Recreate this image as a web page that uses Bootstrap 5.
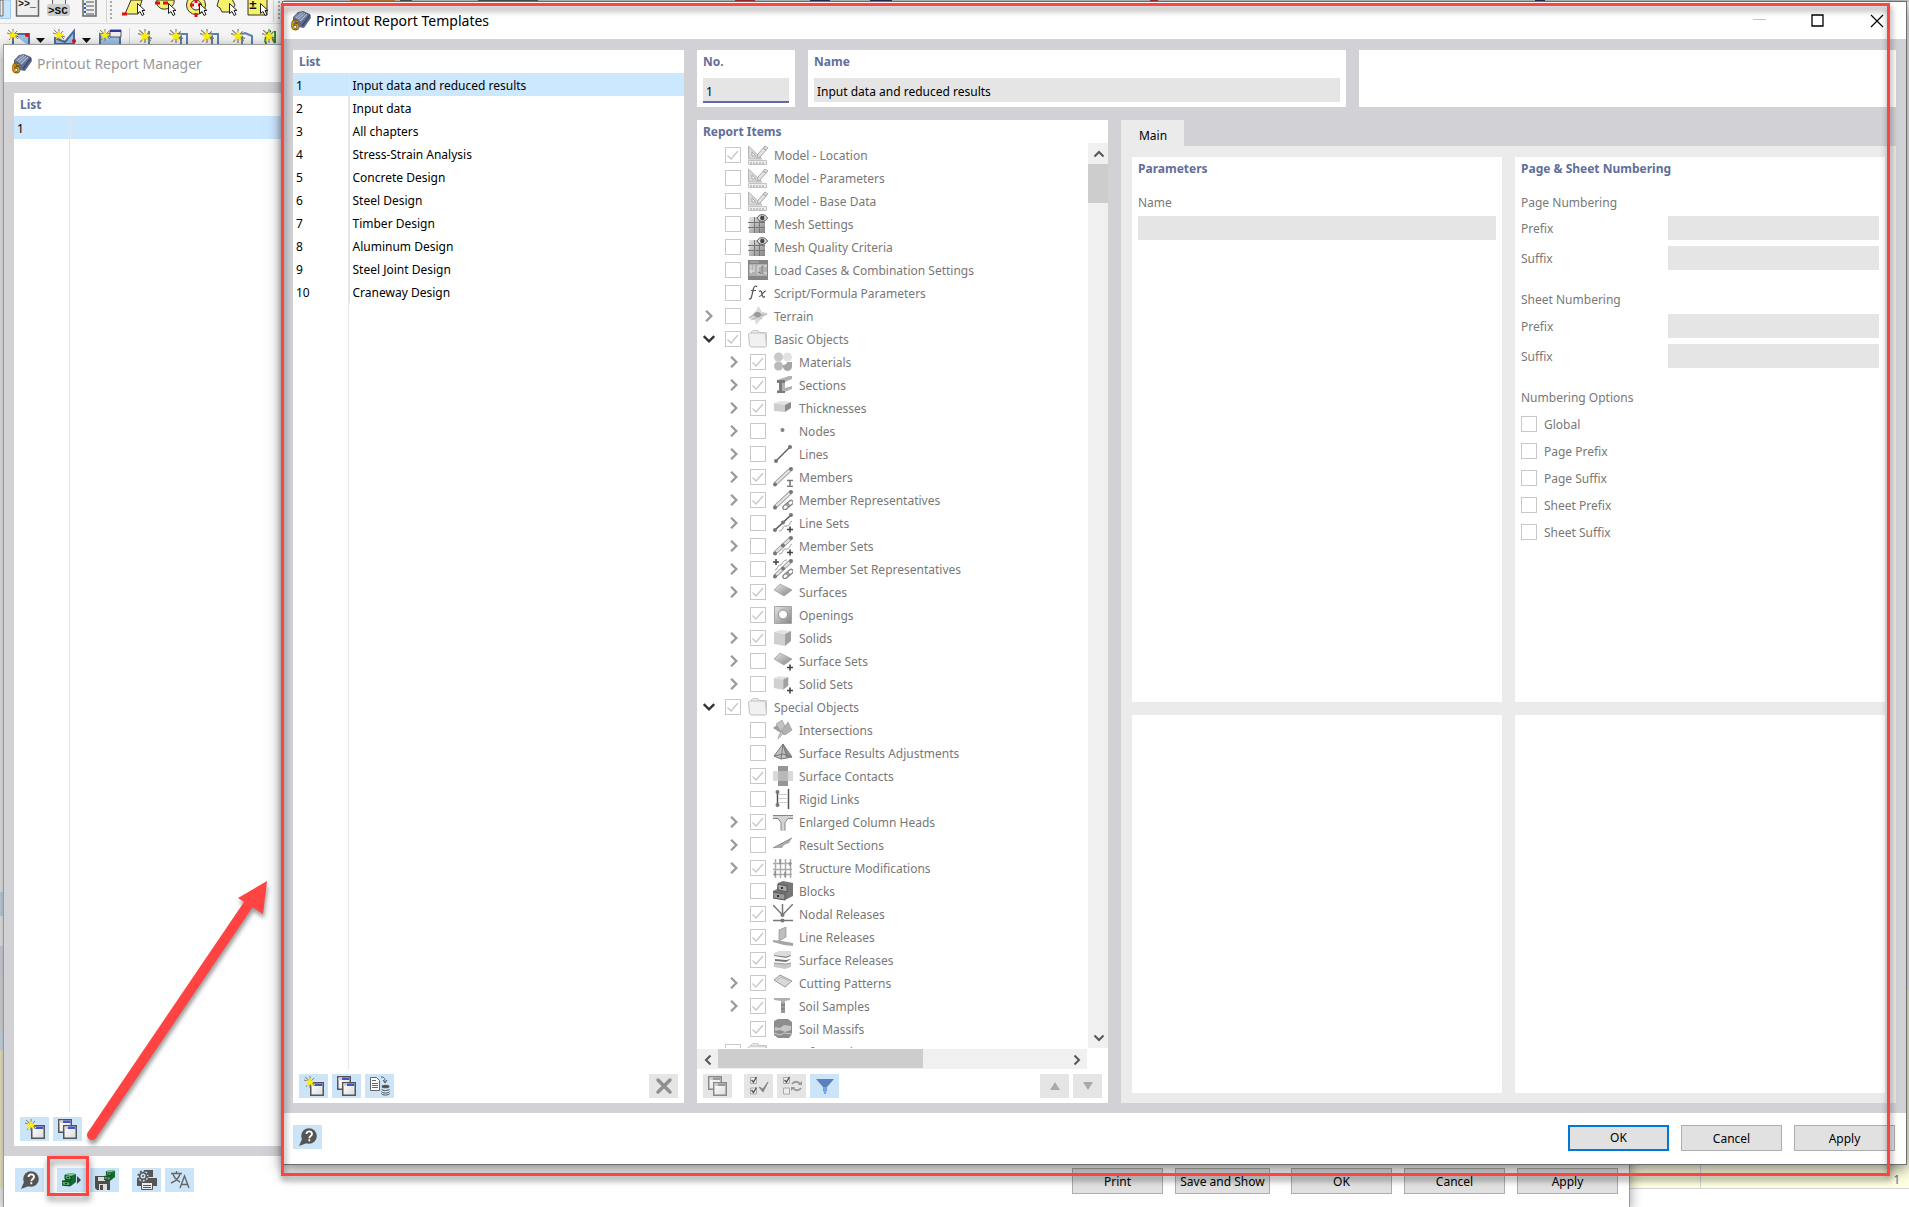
<!DOCTYPE html>
<html lang="en">
<head>
<meta charset="utf-8">
<meta name="viewport" content="width=device-width, initial-scale=1">
<title>Printout Report Templates</title>
<link href="https://cdn.jsdelivr.net/npm/bootstrap@5.3.0/dist/css/bootstrap.min.css" rel="stylesheet">
<style>
  :root { --frame:#d2d1d6; --soft:#ebebeb; --field:#e5e5e5; --tool:#cce4f7; --pick:#cce8ff; --head:#5f6e9b; --dim:#787878; --red:#ff4343; }
  html, body { height:100%; }
  body { font-family:"Noto Sans","Open Sans",sans-serif; font-size:12px; line-height:16px; color:#000; background:#f4f4f4; }
  svg { display:block; flex:none; }
  .desktop { height:100vh; min-height:900px; }
  .win { position:absolute; background:#fff; }
  .win-manager { left:3px; top:44px; right:279px; bottom:0; border:1px solid #9a9a9a; border-bottom:0; box-shadow:0 3px 12px rgba(0,0,0,.4); }
  .win-templates { left:282px; top:1px; right:2px; bottom:42px; border:1px solid #6e6e6e; box-shadow:0 4px 14px rgba(0,0,0,.5); }
  .win-title { height:37px; padding-left:8px; gap:5px; font-size:14px; color:#000; }
  .win-manager .win-title { color:#999; }
  .frame { background:var(--frame); min-height:0; padding:11px 10px 10px; }
  .pane { background:#fff; }
  .pane-head { height:23px; padding:3px 6px; font-weight:700; font-size:12px; line-height:17px; color:var(--head); margin:0; }
  .list-body { background:linear-gradient(#e6e6e6,#e6e6e6) 55px 0/1px 100% no-repeat; }
  .list-grid { width:100%; }
  .list-grid td { height:23px; padding:3px 3px 0; line-height:16px; white-space:nowrap; }
  .list-grid td:first-child { width:56px; border-right:1px solid #e6e6e6; }
  .list-grid .picked td { background:var(--pick); }
  .tool { width:29px; height:24px; padding:0; border:0; background:var(--tool); display:flex; align-items:center; justify-content:center; }
  .tool:disabled { background:var(--field); }
  .apart { margin-left:13px; }
  .toolrow { padding:5px 6px; height:34px; gap:4px; }
  .field { border:0; background:var(--field); height:24px; padding:3px 3px 0; width:100%; min-width:0; color:#000; border-radius:0; font-size:12px; }
  .field-no { border-bottom:2px solid #6566b0; height:25px; }
  .push { width:101px; height:26px; border:1px solid #adadad; background:#e1e1e1; font-size:12px; padding:1px 0 0; line-height:16px; color:#000; white-space:nowrap; }
  .push-main { border:2px solid #0078d7; padding:0; }
  .push-row { gap:12px; }
  .push-print { width:91px; }
  .push-save { width:95px; margin-right:9px; }
  .col-list { flex:391 1 0; min-width:0; }
  .col-right { flex:1199 1 0; min-width:0; }
  .col-items { flex:411 1 0; min-width:0; }
  .col-detail { flex:775 1 0; min-width:0; }
  .gap-frame { gap:13px; }
  .top-pane { height:57px; }
  .top-field { padding:5px 6px 0; }
  .box-no { width:98px; flex:none; }
  .box-even { flex:1 1 0; min-width:0; }
  .tree { min-height:0; overflow:hidden; padding-left:4px; }
  .tree-row { height:23px; color:var(--dim); white-space:nowrap; }
  .tree-row label { margin-left:6px; padding-top:3px; }
  .tree-row .icon { margin-left:7px; }
  .kids { padding-left:25px; }
  .twist { width:21px; height:23px; border:0; background:none; padding:0 0 0 1px; flex:none; margin-right:3px; }
  .tick { appearance:none; width:16px; height:16px; border:1px solid #c8c8c8; background:#fff; margin:0; border-radius:0; flex:none; }
  .tick:checked { background:#fff url("data:image/svg+xml,%3Csvg xmlns='http://www.w3.org/2000/svg' viewBox='0 0 14 14'%3E%3Cpath d='M1.5 7.5l3.5 3.5 7-8' fill='none' stroke='%23c6c6c6' stroke-width='1.3'/%3E%3C/svg%3E") center/14px no-repeat; }
  .bar { background:#f0f0f0; }
  .bar-v { width:20px; } .bar-h { height:20px; margin:1px 21px 0 0; }
  .bar button { width:21px; height:21px; border:0; padding:0; background:none; display:flex; align-items:center; justify-content:center; flex:none; }
  .bar-v .thumb { background:#cdcdcd; height:39px; } .bar-h .thumb { background:#cdcdcd; width:205px; height:19px; }
  .tab-main { width:63px; height:26px; border:0; background:var(--soft); padding:5px 0 0 1px; font-size:12px; }
  .tab-body { background:var(--soft); padding:11px 11px 10px; display:grid; grid-template:545fr 378fr / 1fr 1fr; gap:13px; }
  .dim { color:var(--dim); }
  .form-part { padding:15px 6px 0; }
  .num-row { height:24px; margin-bottom:6px; }
  .num-row label { width:147px; flex:none; padding-top:2px; }
  .opt-row { height:27px; gap:7px; }
  .opt-row label { padding-top:2px; }
  .caption { display:block; height:21px; margin:0; }
  .caption-next { margin-top:22px; height:20px; }
  .num-row + .caption-next + .num-row { margin-top:2px; }
  .foot { height:51px; padding:12px 11px 0 10px; }
  .win-manager .foot { padding-left:11px; }
  .app-left { left:0; top:58px; width:3px; bottom:0; background:linear-gradient(#f0f0f0 0 834px,#c9dcee 834px 858px,#f2f2f2 858px 888px,#dcdce8 888px 918px,#e0e0e0 918px 970px,#d5e5f3 970px 992px,#f3f0cc 992px 1130px,#f6f6f6 1130px); position:absolute; overflow:hidden; }
  .app-sheet { position:absolute; right:0; bottom:18px; width:279px; height:200px; border-bottom:1px solid #d6d6d6; background:linear-gradient(90deg,transparent 70px,#d6d6d6 70px 71px,transparent 71px) #ffffe1; padding:0 9px 0 0; color:#2b82b5; }
  .app-rest { position:absolute; right:0; bottom:0; width:279px; height:18px; background:#fff; }
  .mark-frame { position:absolute; border:3px solid var(--red); filter:drop-shadow(1px 4px 3px rgba(0,0,0,.5)); pointer-events:none; }
  .mark-big { left:281px; top:3px; right:19px; bottom:31px; }
  .mark-small { left:47px; bottom:11px; width:42px; height:40px; }
  .mark-arrow { position:absolute; left:80px; bottom:54px; pointer-events:none; filter:drop-shadow(1px 4px 2px rgba(0,0,0,.4)); }
</style>
</head>
<body>
<svg width="0" height="0" class="position-absolute" aria-hidden="true">
  <defs>
    <linearGradient id="g" x1="0" y1="0" x2="1" y2="1"><stop offset="0" stop-color="#e6e6e6"/><stop offset="1" stop-color="#858585"/></linearGradient>
    <linearGradient id="w" x1="0" y1="0" x2="1" y2="1"><stop offset="0" stop-color="#fff"/><stop offset="1" stop-color="#dcdcdc"/></linearGradient>
    <symbol id="model" viewBox="0 0 20 20"><path d="M.5 1v13H14z" fill="#d9d9d9" stroke="#b5b5b5"/><path d="M4 7v4h4z" fill="#fff" stroke="#aaa"/><path d="M10 9l7-8 3 2-8 9-3 1z" fill="#e2e2e2" stroke="#ababab"/><path d="M15 3l3 2" stroke="#999"/><path d="M.5 15.500h18v4h-18z" fill="#eee" stroke="#c2c2c2"/><path d="M3 17v2M6 17v2M9 17v2M12 17v2M15 17v2" stroke="#999"/></symbol>
    <symbol id="mesh" viewBox="0 0 20 20"><path d="M1 3h16v16H1z" fill="url(#g)"/><path d="M0 8.500h17M0 13.500h17M6.500 3v16M11.500 3v16" stroke="#777"/><path d="M9 4c2.500-4.500 8-4.500 10.500 0-2.500 4.500-8 4.500-10.500 0z" fill="#ddd" stroke="#555"/><circle cx="14.300" cy="4" r="2.200" fill="#444"/></symbol>
    <symbol id="load" viewBox="0 0 20 20"><path d="M0 0h20v20H0z" fill="#858585"/><path d="M1 4h18v12H1z" fill="#b0b0b0"/><path d="M3 5v7M6 5v7M2 10l1 3 2-3M10 6h4v8h-4zM16 6h3M16 13h3" stroke="#e6e6e6" fill="none"/><path d="M10 12l3 2M14 6v8" stroke="#666"/><path d="M2 2h9" stroke="#bbb"/></symbol>
    <symbol id="fx" viewBox="0 0 20 20"><path d="M9 4c-1-1.500-3-1-3.500 1.500L3.500 14c-.5 2-1.500 2.500-2.500 1.500M3 7.500h5M11 8.500c2-1.500 2.500 0 3 2.500s1 4 3 2.500M18 8c-3-.5-4 6-7 5.500" fill="none" stroke="#555" stroke-width="1.200"/></symbol>
    <symbol id="terrain" viewBox="0 0 20 20"><path d="M0 12l7-6 3.500-6 3.500 6 6 1-8 7-4 5-1-5z" fill="#d9d9d9"/><path d="M1 12l6-4 6 2 6-2M3 14l7-3 4 2M5 9l5 2 6-4" fill="none" stroke="#b5b5b5"/><ellipse cx="9.500" cy="8.500" rx="3.500" ry="2.500" fill="#999"/></symbol>
    <symbol id="folder" viewBox="0 0 20 20"><path d="M3.500 4V2.500L5 1.500h5l1 2h7.500v13" fill="#ececec" stroke="#c8c8c8"/><path d="M.5 5l1.500-1h14l1.500 1.500 1 11-1 1.500H3l-1.500-1.500z" fill="#f1f1f1" stroke="#c0c0c0"/></symbol>
    <symbol id="materials" viewBox="0 0 20 20"><circle cx="5.500" cy="5" r="4.500" fill="#c8c8c8"/><circle cx="14.500" cy="5" r="4.500" fill="#e2e2e2"/><circle cx="5.500" cy="14" r="4.500" fill="#bababa"/><path d="M10 10h9v4a4.500 4.500 0 0 1-9 1z" fill="#a5a5a5"/><path d="M10 10h4c0 2-2 3-4 3z" fill="#fff"/></symbol>
    <symbol id="sections" viewBox="0 0 20 20"><path d="M4 5l12-4h3v3l-7 3v6l7-2v3l-10 4H4v-3h3V8H4z" fill="#b2b2b2"/><path d="M4 5h8v3h-3v8h3v2H4v-2h2V8H4z" fill="#7c7c7c"/></symbol>
    <symbol id="thick" viewBox="0 0 20 20"><path d="M1 5l7-2 10 1-6 3z" fill="#e2e2e2"/><path d="M1 5l11 2v7L1 13z" fill="#cecece"/><path d="M12 7l6-3v6l-6 4z" fill="#8c8c8c"/></symbol>
    <symbol id="node" viewBox="0 0 20 20"><circle cx="9.500" cy="9" r="2" fill="#808080"/></symbol>
    <symbol id="line" viewBox="0 0 20 20"><path d="M3 17L17 3" stroke="#555" stroke-width="1.300"/><circle cx="3" cy="17" r="2" fill="#777"/><circle cx="17" cy="3" r="2" fill="#777"/></symbol>
    <symbol id="rod" viewBox="0 0 20 20"><path d="M2 17L18 2" stroke="#a2a2a2" stroke-width="4"/><path d="M3 16L17 3" stroke="#e6e6e6" stroke-width="2"/><circle cx="2" cy="17.500" r="2" fill="#777"/><circle cx="18" cy="2" r="2" fill="#777"/></symbol>
    <symbol id="plus" viewBox="0 0 20 20"><path d="M17 13.500v6M14 16.500h6" stroke="#444" stroke-width="1.600"/></symbol>
    <symbol id="chain" viewBox="0 0 20 20"><g fill="none" stroke="#888" stroke-width="1.400" transform="rotate(-40 15 15)"><rect x="9" y="13" width="7" height="4" rx="2"/><rect x="14" y="13" width="7" height="4" rx="2"/></g></symbol>
    <symbol id="member" viewBox="0 0 20 20"><use href="#rod"/><path d="M14 13.500h6M14 19.500h6M17 13v6" stroke="#777" stroke-width="1.500"/></symbol>
    <symbol id="memrep" viewBox="0 0 20 20"><use href="#rod"/><use href="#chain"/></symbol>
    <symbol id="lineset" viewBox="0 0 20 20"><path d="M2 17L18 2" stroke="#555" stroke-width="1.500"/><circle cx="2" cy="17" r="2" fill="#777"/><circle cx="10" cy="9.500" r="2" fill="#777"/><circle cx="18" cy="2" r="2" fill="#777"/><path d="M6 18c6-1 2-5 7-5s3-4 6-5" fill="none" stroke="#999"/><use href="#plus"/></symbol>
    <symbol id="memset" viewBox="0 0 20 20"><use href="#rod"/><circle cx="10" cy="9.500" r="2" fill="#777"/><path d="M6 18c6-1 2-5 7-5s3-4 6-5" fill="none" stroke="#999"/><use href="#plus"/></symbol>
    <symbol id="memsetrep" viewBox="0 0 20 20"><use href="#rod"/><circle cx="10" cy="9.500" r="2" fill="#777"/><path d="M3 0v6M0 3h6" stroke="#444" stroke-width="1.500"/><path d="M2 11c3 0 2-5 5-5s2-5 7-5" fill="none" stroke="#999"/><use href="#chain"/></symbol>
    <symbol id="surface" viewBox="0 0 20 20"><path d="M1 8l6-6 12 6-8 6z" fill="url(#g)" stroke="#999" stroke-width=".7"/></symbol>
    <symbol id="opening" viewBox="0 0 20 20"><path d="M1.500 1.500h17v17h-17z" fill="url(#g)" stroke="#a5a5a5"/><circle cx="10" cy="9.500" r="4.500" fill="#fff" stroke="#8d8d8d"/></symbol>
    <symbol id="solid" viewBox="0 0 20 20"><path d="M1 4l6-2 11 1-5 3z" fill="#e2e2e2"/><path d="M1 4l11 2v12L1 16z" fill="#d0d0d0"/><path d="M12 6l6-3v10l-6 5z" fill="#a0a0a0"/></symbol>
    <symbol id="surfset" viewBox="0 0 20 20"><use href="#surface"/><use href="#plus"/></symbol>
    <symbol id="solidset" viewBox="0 0 20 20"><use href="#solid" width="17" height="18"/><use href="#plus"/></symbol>
    <symbol id="cross" viewBox="0 0 20 20"><path d="M0 8l4-3 15 5-8 5z" fill="#9c9c9c"/><path d="M3 4l6-4 4 8-5 8-3 3 1-4 2-3z" fill="#c2c2c2" stroke="#999" stroke-width=".6"/><path d="M8 11l7-9 4 8-7 5z" fill="#b0b0b0" stroke="#999" stroke-width=".6"/></symbol>
    <symbol id="pyramid" viewBox="0 0 20 20"><path d="M10 1L1 13l7 3 11-2z" fill="#c2c2c2" stroke="#777"/><path d="M10 1l9 13-5 1z" fill="#909090"/><path d="M10 1L8 16M10 1l4 14M1 13l9-2 9 3" stroke="#777" fill="none"/></symbol>
    <symbol id="contact" viewBox="0 0 20 20"><path d="M5 0h10v20H5z" fill="#969696"/><path d="M0 5h20v10H0z" fill="#d9d9d9"/><path d="M5 5h10v10H5z" fill="#b8b8b8"/></symbol>
    <symbol id="rigid" viewBox="0 0 20 20"><path d="M4.500 3v13M15.500 0v20" stroke="#555" stroke-width="1.500"/><path d="M6 5.500h8M6 9.500h8M6 13.500h8" stroke="#ccc"/><circle cx="4.500" cy="3" r="2" fill="#777"/><circle cx="4.500" cy="16" r="2" fill="#777"/></symbol>
    <symbol id="colhead" viewBox="0 0 20 20"><path d="M0 3h20v3l-5 1-3 4v8H8v-8L5 7 0 6z" fill="#d4d4d4"/><path d="M0 3.500h20M0 6.500h5l3 4v8M20 6.500h-5l-3 4v8" stroke="#858585" fill="none"/></symbol>
    <symbol id="result" viewBox="0 0 20 20"><path d="M0 13L19 3l-3 5-5 2-2 3z" fill="#aaa"/><path d="M0 13L19 3" stroke="#888"/></symbol>
    <symbol id="grid" viewBox="0 0 20 20"><path d="M2.500 1v19M7.500 1v19M12.500 1v19M17.500 1v19M0 5.500h19M0 11.500h19M0 16.500h19" stroke="#ababab" stroke-width="1.500"/><path d="M7 1v5M17 4v4M12 14v5M2 13v5" stroke="#777"/></symbol>
    <symbol id="blocks" viewBox="0 0 20 20"><path d="M5 2l5-2 10 2v13l-8 4-12-2v-7l4-2z" fill="#777"/><path d="M5 3l9 2v6l-9-2z" fill="#aaa" stroke="#555"/><path d="M0 11l12 2v6L0 17z" fill="#999" stroke="#555"/><path d="M9 6v2M5 14v2" stroke="#333" stroke-width="2"/></symbol>
    <symbol id="nodal" viewBox="0 0 20 20"><path d="M0 1l9.500 10L20 0M9.500 0v11M0 16.500h20" stroke="#777" stroke-width="1.500" fill="none"/><circle cx="9.500" cy="11" r="2" fill="#777"/><circle cx="9.500" cy="16.500" r="2" fill="#777"/></symbol>
    <symbol id="linerel" viewBox="0 0 20 20"><path d="M6 3l7-3v10l-7 4z" fill="#bebebe" stroke="#8d8d8d" stroke-width=".7"/><path d="M0 13l9 1 11 2v3l-9-1-11-3z" fill="#a5a5a5"/></symbol>
    <symbol id="surfrel" viewBox="0 0 20 20"><path d="M1 3l5-2h12v4l-5 1.500L1 5z" fill="#dcdcdc"/><path d="M1 5l12 1.500L18 5v1l-5 2L1 6z" fill="#888"/><path d="M2 9l11 1 5-1-5 3-11-1z" fill="#777"/><path d="M1 13l12 1 5-1v4l-6 2-11-2z" fill="#c8c8c8"/><path d="M1 13l12 1 5-1" stroke="#999" fill="none"/></symbol>
    <symbol id="cut" viewBox="0 0 20 20"><path d="M1 7l6-5 12 6-7 6z" fill="#d9d9d9" stroke="#999"/><path d="M4 7l4-3 8 4" fill="none" stroke="#b5b5b5"/></symbol>
    <symbol id="sample" viewBox="0 0 20 20"><path d="M1 2h16v2l-5 1v3H8V5L1 4z" fill="#b0b0b0"/><path d="M8 7h4v10H8z" fill="#999"/><path d="M8 9h4M8 13h4" stroke="#777"/></symbol>
    <symbol id="massif" viewBox="0 0 20 20"><path d="M1 2l4-2h10l4 3v12l-3 4H5l-4-3z" fill="#8d8d8d"/><path d="M2 8l5 1 4-3 7 1v4l-6 2-5-2-5 1z" fill="#c5c5c5"/><path d="M1 14l6 2 4-2 8 1" stroke="#ccc" fill="none"/></symbol>
    <symbol id="logo" viewBox="0 0 20 20"><path d="M2 6l5-5 5-1 7 3 1 4-7 10-6-1-5-6z" fill="#5d6d8e"/><path d="M3 6l6-5 8 3-7 7z" fill="#7d8dac"/><path d="M5 7l7-6M7 8l7-6M9 10l7-7" stroke="#b5c3d8"/><path d="M19 4l-8 11" stroke="#3c4a68" stroke-width="1.500"/><text x="0" y="19" font-family="Liberation Sans, sans-serif" font-weight="700" font-size="15" fill="#e3b62c" stroke="#6e5208" stroke-width=".8">6</text></symbol>
    <symbol id="wnd" viewBox="0 0 14 14"><path d="M.75.75h12.500v12.500H.75z" fill="url(#w)" stroke="#555" stroke-width="1.500"/><path d="M1.500 1.500h11V4h-11z" fill="#d4d4d4"/><path d="M5 1.500h7.500V4H5z" fill="#4255c4"/></symbol>
    <symbol id="wndg" viewBox="0 0 14 14"><path d="M.75.75h12.500v12.500H.75z" fill="url(#w)" stroke="#888" stroke-width="1.500"/><path d="M1.500 1.500h11V4h-11z" fill="#ccc"/><path d="M5 1.500h7.500V4H5z" fill="#999"/></symbol>
    <symbol id="star" viewBox="0 0 12 12"><path d="M6 0v12M0 4l12 4M2 11l8-9M1 1l10 9" stroke="#777"/><path d="M6 1l1.200 3.500 4 .5-3 2 .8 3.500L6 8.300 3 10.500 3.800 7l-3-2 4-.5z" fill="#ffee10"/></symbol>
    <symbol id="new" viewBox="0 0 20 20"><use href="#wnd" x="6" y="6" width="14" height="14"/><use href="#star" width="12" height="12"/></symbol>
    <symbol id="copy" viewBox="0 0 20 20"><use href="#wnd" width="14" height="14"/><use href="#wnd" x="5" y="6" width="14" height="14"/></symbol>
    <symbol id="copyg" viewBox="0 0 20 20"><use href="#wndg" width="14" height="14"/><use href="#wndg" x="5" y="6" width="14" height="14"/></symbol>
    <symbol id="docdb" viewBox="0 0 20 20"><path d="M.5 1.500h6l3 3v10h-9z" fill="#fff" stroke="#666"/><path d="M2 4.500h4M2 7.500h6M2 9.500h6M2 11.500h6" stroke="#666"/><path d="M11 1c3 0 4 1 4 5M13 4l2 3 2-3" fill="none" stroke="#555"/><ellipse cx="15.500" cy="10.500" rx="4" ry="1.800" fill="#555"/><path d="M11.500 13c0 2 8 2 8 0M11.500 15.500c0 2 8 2 8 0M11.500 17.500c0 2 8 2 8 0" fill="none" stroke="#555"/></symbol>
    <symbol id="help" viewBox="0 0 20 20"><circle cx="11" cy="9" r="7.800" fill="#555"/><path d="M4 12l-3 7 8-3z" fill="#555"/><path d="M8.500 7c0-3.500 5.500-3.500 5.500 0 0 2-2.700 2-2.700 4.200M11.300 12.300v2" fill="none" stroke="#fff" stroke-width="1.800"/></symbol>
    <symbol id="drawer" viewBox="0 0 14 14"><path d="M3 2l4-2 7 1v8l-5 4-9-1V8l3-1z" fill="#176a34"/><path d="M3 2l6 1v4L3 6zM0 8l8 1v4l-8-1z" fill="#52a96c" stroke="#0d3d1d"/><path d="M3 2l4-2 7 1-5 2z" fill="#7cc793"/><path d="M6 4v1M4 10v1" stroke="#111" stroke-width="1.500"/></symbol>
    <symbol id="save" viewBox="0 0 20 20"><path d="M0 6h15v14H2l-2-2z" fill="#4d4d4d"/><path d="M3 7h7v4H3zM4 14h8v6H4z" fill="#ddd"/><path d="M5 15h3v5H5z" fill="#4d4d4d"/><use href="#drawer" x="9" width="11" height="11"/></symbol>
    <symbol id="print" viewBox="0 0 20 20"><path d="M7 0h9v7H7z" fill="#555"/><path d="M0 8h20v8H0z" fill="#555"/><path d="M4.500 12.500h11v7h-11z" fill="#eee" stroke="#555"/><path d="M6 15.500h8M6 17.500h8" stroke="#555"/><circle cx="6" cy="6" r="5.500" fill="#cce4f7"/><circle cx="6" cy="6" r="3.300" fill="#cce4f7" stroke="#555" stroke-width="1.600"/><circle cx="6" cy="6" r="4.800" fill="none" stroke="#555" stroke-width="1.600" stroke-dasharray="1.900 1.870"/><circle cx="6" cy="6" r="1" fill="#555"/></symbol>
    <symbol id="lang" viewBox="0 0 20 20"><path d="M1 3.500h11M6.500 1v2M10 4c-1 4-4 7-9 9M3 4c1 3 3 6 7 8M10 18l4.500-12L19 18M11.500 14.500h6" fill="none" stroke="#666" stroke-width="1.400"/></symbol>
    <symbol id="del" viewBox="0 0 20 20"><path d="M4 4l12 12M16 4L4 16" stroke="#909090" stroke-width="3.500" stroke-linecap="round"/></symbol>
    <symbol id="allon" viewBox="0 0 20 20"><path d="M1.500 1.500h6v6h-6zM1.500 12h6v6h-6z" fill="#eee" stroke="#aaa"/><path d="M2.500 4l2 2 3-5M2.500 14l2 2.500 3-5" fill="none" stroke="#555" stroke-width="1.400"/><path d="M10 11l4 5 5-10-5 7z" fill="#888" stroke="#888"/></symbol>
    <symbol id="swap" viewBox="0 0 20 20"><path d="M1.500 1.500h6v6h-6zM1.500 12h6v6h-6z" fill="#eee" stroke="#aaa"/><path d="M2.500 4l2 2 3-5" fill="none" stroke="#555" stroke-width="1.400"/><path d="M10 8c2-3 6-3 8 0M19 12c-2 3-6 3-8 0" fill="none" stroke="#999" stroke-width="1.800"/><path d="M20 5v4h-4zM9 15v-4h4z" fill="#999"/></symbol>
    <symbol id="funnel" viewBox="0 0 20 20"><path d="M1 3h18l-7 8v4H8v-4z" fill="#5c80bd"/><path d="M8 11h4l-1 7H9z" fill="#7ba3e8"/></symbol>
    <symbol id="chev" viewBox="0 0 12 12"><path d="M3.500 1.500L8 6l-4.500 4.500" fill="none" stroke="currentColor" stroke-width="2"/></symbol>
  </defs>
</svg>

<div class="desktop position-relative overflow-hidden">
  <!-- main application behind the two dialogs -->
  <svg width="1909" height="2" aria-hidden="true"><path d="M0 0h1909v2H0z" fill="#c9c9c9"/><path d="M350 0h45v2h-45z" fill="#c98242"/><path d="M400 0h12v2h-12zM478 0h60v2h-60z" fill="#555"/><path d="M735 0h20v2h-20zM1150 0h8v2h-8z" fill="#b03030"/><path d="M810 0h20v2h-20zM870 0h22v2h-22zM1535 0h10v2h-10z" fill="#31315c"/></svg>
  <svg class="position-absolute top-0 start-0" width="284" height="60" font-family="Liberation Mono, monospace" font-weight="700" aria-hidden="true">
    <path d="M0 0h284v60H0z" fill="#f5f5f5"/><path d="M0 23.500h284" stroke="#dcdcdc"/>
    <path d="M0 0h10.500v18.500H0" fill="#cce4f7" stroke="#9accf2"/><path d="M0 0h3v16H0z" fill="#eee" stroke="#666"/>
    <path d="M16.500 -3h22v19h-22z" fill="#efefef" stroke="#666" stroke-width="1.500"/><text x="18" y="7" font-size="10" fill="#222">&gt;&gt;_</text>
    <path d="M52.500 -2h13v7h-13z" fill="#eee" stroke="#666"/><rect x="47" y="4" width="23" height="12" rx="3" fill="#ccc"/><text x="48" y="14" font-size="11" fill="#111">&gt;SC</text>
    <path d="M83 -2h13v18H83z" fill="#eee" stroke="#666" stroke-width="1.500"/><path d="M86 2h8M86 6h8M86 10h8M86 14h8" stroke="#555"/><path d="M84 4h2M84 8h2M84 12h2" stroke="#2a62c9" stroke-width="2"/>
    <path d="M106.500 0v22M273.500 0v22M129.500 28v16" stroke="#d4d4d4"/><path d="M111 1v20M279 1v20" stroke="#aaa" stroke-width="2" stroke-dasharray="2 2"/>
    <g fill="#f7f06b" stroke="#333"><path d="M125 14L131 0h11l-4 14z"/><path d="M157 0c-2 6 4 10 9 9s9-4 8-9z"/><circle cx="196" cy="5" r="9.500"/><path d="M219 -1l12-2 4 8-4 7h-9l-2-4-3-2z"/><path d="M248 -2h19v17h-19z"/></g>
    <circle cx="196" cy="5" r="5" fill="#f5f5f5" stroke="#333"/><text x="249" y="9" font-size="13" fill="#111">±</text>
    <path d="M122 14h5M155 3h5M163 3h5M190 5h4M198 5h4M196 -1v4M196 13v4" stroke="#e01010" stroke-width="3"/>
    <g fill="#fff" stroke="#222"><path id="cur" d="M137.500 3.500v10l2.500-2 2 4 2-1-2-4h3z"/><use href="#cur" x="31"/><use href="#cur" x="62"/><use href="#cur" x="92"/><use href="#cur" x="123"/></g>
    <path d="M13 34h16v12M13 34v12M55 38l10 4 9-11v13H55zM100 34h20v12h-20z" fill="#9cc3ea" stroke="#4a6f9c" stroke-width="2"/><path d="M110 30h11v7h-11z" fill="#eee" stroke="#555"/><path d="M110 30h11v2h-11z" fill="#2a3a9c"/>
    <circle cx="12" cy="35" r="2" fill="#e01010"/><circle cx="27" cy="35" r="2" fill="#e01010"/><circle cx="74" cy="41" r="2" fill="#e01010"/>
    <path d="M36 38h9l-4.500 5zM82 38h9l-4.500 5z" fill="#111"/>
    <path d="M149 31v13M175 34h12v10M181 34v10M206 34h12v10M212 34v10M237 36l8-3 7 3v8M242 36v8" fill="none" stroke="#5b82b5" stroke-width="2"/><path d="M266 44c-2-6 1-12 5-13M269 34l6 9M275 31v12" stroke="#238a2b" fill="none" stroke-width="2"/>
    <use href="#star" x="7" y="29" width="12" height="12"/><use href="#star" x="53" y="29" width="12" height="12"/><use href="#star" x="99" y="29" width="12" height="12"/><use href="#star" x="138" y="29" width="14" height="14"/><use href="#star" x="169" y="29" width="14" height="14"/><use href="#star" x="200" y="29" width="14" height="14"/><use href="#star" x="231" y="29" width="14" height="14"/><use href="#star" x="262" y="29" width="14" height="14"/>
  </svg>
  <div class="app-left"></div>
  <div class="app-sheet d-flex align-items-end justify-content-end">1</div>
  <div class="app-rest"></div>

  <!-- Printout Report Manager -->
  <section class="win win-manager d-flex flex-column">
    <header class="win-title d-flex align-items-center"><svg width="20" height="20"><use href="#logo"/></svg>Printout Report Manager</header>
    <div class="frame flex-grow-1 d-flex">
      <div class="pane flex-grow-1 d-flex flex-column">
        <h2 class="pane-head">List</h2>
        <div class="list-body flex-grow-1"><table class="list-grid"><tbody><tr class="picked"><td>1</td><td></td></tr></tbody></table></div>
        <div class="toolrow d-flex">
          <button class="tool" aria-label="New"><svg width="20" height="20"><use href="#new"/></svg></button>
          <button class="tool" aria-label="Copy"><svg width="20" height="20"><use href="#copy"/></svg></button>
        </div>
      </div>
    </div>
    <footer class="foot d-flex align-items-start">
      <div class="d-flex me-auto">
        <button class="tool" aria-label="Help"><svg width="20" height="20"><use href="#help"/></svg></button>
        <button class="tool apart" aria-label="Templates"><svg width="14" height="14"><use href="#drawer"/></svg><svg width="6" height="10"><path d="M1 1l4 4-4 4z" fill="#444"/></svg></button>
        <button class="tool ms-1" aria-label="Save template"><svg width="20" height="20"><use href="#save"/></svg></button>
        <button class="tool apart" aria-label="Printer settings"><svg width="20" height="20"><use href="#print"/></svg></button>
        <button class="tool ms-1" aria-label="Language"><svg width="20" height="20"><use href="#lang"/></svg></button>
      </div>
      <div class="d-flex push-row">
        <button class="push push-print">Print</button><button class="push push-save">Save and Show</button>
        <button class="push">OK</button><button class="push">Cancel</button><button class="push">Apply</button>
      </div>
    </footer>
  </section>

  <!-- Printout Report Templates -->
  <section class="win win-templates d-flex flex-column">
    <header class="win-title d-flex align-items-center">
      <svg width="20" height="20"><use href="#logo"/></svg><span class="me-auto">Printout Report Templates</span>
      <svg width="153" height="20" fill="none" stroke="#000"><path d="M0 8.500h13" stroke="#c4c4c4"/><path d="M59 4h11v11H59z" stroke-width="1.300"/><path d="M118 4l12 12M130 4l-12 12" stroke-width="1.200"/></svg>
    </header>
    <div class="frame flex-grow-1 d-flex gap-frame">
      <div class="pane col-list d-flex flex-column">
        <h2 class="pane-head">List</h2>
        <div class="list-body flex-grow-1">
          <table class="list-grid"><tbody>
            <tr class="picked"><td>1</td><td>Input data and reduced results</td></tr>
            <tr><td>2</td><td>Input data</td></tr>
            <tr><td>3</td><td>All chapters</td></tr>
            <tr><td>4</td><td>Stress-Strain Analysis</td></tr>
            <tr><td>5</td><td>Concrete Design</td></tr>
            <tr><td>6</td><td>Steel Design</td></tr>
            <tr><td>7</td><td>Timber Design</td></tr>
            <tr><td>8</td><td>Aluminum Design</td></tr>
            <tr><td>9</td><td>Steel Joint Design</td></tr>
            <tr><td>10</td><td>Craneway Design</td></tr>
          </tbody></table>
        </div>
        <div class="toolrow d-flex">
          <button class="tool" aria-label="New"><svg width="20" height="20"><use href="#new"/></svg></button>
          <button class="tool" aria-label="Copy"><svg width="20" height="20"><use href="#copy"/></svg></button>
          <button class="tool" aria-label="Import"><svg width="20" height="20"><use href="#docdb"/></svg></button>
          <button class="tool ms-auto" aria-label="Delete" disabled><svg width="20" height="20"><use href="#del"/></svg></button>
        </div>
      </div>
      <div class="col-right d-flex flex-column gap-frame">
        <div class="d-flex gap-frame">
          <div class="pane top-pane box-no"><label class="pane-head d-block" for="no">No.</label><div class="top-field"><input class="field field-no d-block" id="no" value="1"></div></div>
          <div class="pane top-pane box-even"><label class="pane-head d-block" for="name">Name</label><div class="top-field"><input class="field d-block" id="name" value="Input data and reduced results"></div></div>
          <div class="pane top-pane box-even"></div>
        </div>
        <div class="d-flex flex-grow-1 gap-frame">
          <div class="pane col-items d-flex flex-column">
            <h2 class="pane-head">Report Items</h2>
            <div class="d-flex flex-grow-1" style="height:0">
              <div class="tree flex-grow-1" id="tree"></div>
              <div class="bar bar-v d-flex flex-column">
                <button aria-label="Up"><svg width="12" height="12" color="#555" transform="rotate(-90)"><use href="#chev"/></svg></button>
                <div class="thumb"></div>
                <button class="mt-auto" aria-label="Down"><svg width="12" height="12" color="#555" transform="rotate(90)"><use href="#chev"/></svg></button>
              </div>
            </div>
            <div class="bar bar-h d-flex">
              <button aria-label="Left"><svg width="12" height="12" color="#555" transform="rotate(180)"><use href="#chev"/></svg></button>
              <div class="thumb"></div>
              <button class="ms-auto" aria-label="Right"><svg width="12" height="12" color="#555"><use href="#chev"/></svg></button>
            </div>
            <div class="toolrow d-flex">
              <button class="tool me-2" aria-label="Copy" disabled><svg width="20" height="20"><use href="#copyg"/></svg></button>
              <button class="tool" aria-label="Select all" disabled><svg width="20" height="20"><use href="#allon"/></svg></button>
              <button class="tool" aria-label="Invert" disabled><svg width="20" height="20"><use href="#swap"/></svg></button>
              <button class="tool me-auto" aria-label="Filter"><svg width="20" height="20"><use href="#funnel"/></svg></button>
              <button class="tool" aria-label="Move up" disabled><svg width="12" height="10"><path d="M6 1l5 8H1z" fill="#aaa"/></svg></button>
              <button class="tool" aria-label="Move down" disabled><svg width="12" height="10"><path d="M6 9l5-8H1z" fill="#aaa"/></svg></button>
            </div>
          </div>
          <div class="col-detail d-flex flex-column">
            <div class="d-flex"><button class="tab-main">Main</button></div>
            <div class="tab-body flex-grow-1">
              <div class="pane">
                <h2 class="pane-head">Parameters</h2>
                <div class="form-part dim"><label class="caption" for="pname">Name</label><input class="field d-block" id="pname" disabled></div>
              </div>
              <div class="pane">
                <h2 class="pane-head">Page &amp; Sheet Numbering</h2>
                <div class="form-part dim">
                  <p class="caption">Page Numbering</p>
                  <div class="num-row d-flex align-items-center"><label for="pp">Prefix</label><input class="field" id="pp" disabled></div>
                  <div class="num-row d-flex align-items-center"><label for="ps">Suffix</label><input class="field" id="ps" disabled></div>
                  <p class="caption caption-next">Sheet Numbering</p>
                  <div class="num-row d-flex align-items-center"><label for="sp">Prefix</label><input class="field" id="sp" disabled></div>
                  <div class="num-row d-flex align-items-center"><label for="ss">Suffix</label><input class="field" id="ss" disabled></div>
                  <p class="caption caption-next">Numbering Options</p>
                  <div class="opt-row d-flex align-items-center"><input class="tick" type="checkbox" id="o1" disabled><label for="o1">Global</label></div>
                  <div class="opt-row d-flex align-items-center"><input class="tick" type="checkbox" id="o2" disabled><label for="o2">Page Prefix</label></div>
                  <div class="opt-row d-flex align-items-center"><input class="tick" type="checkbox" id="o3" disabled><label for="o3">Page Suffix</label></div>
                  <div class="opt-row d-flex align-items-center"><input class="tick" type="checkbox" id="o4" disabled><label for="o4">Sheet Prefix</label></div>
                  <div class="opt-row d-flex align-items-center"><input class="tick" type="checkbox" id="o5" disabled><label for="o5">Sheet Suffix</label></div>
                </div>
              </div>
              <div class="pane"></div>
              <div class="pane"></div>
            </div>
          </div>
        </div>
      </div>
    </div>
    <footer class="foot d-flex align-items-start">
      <button class="tool me-auto" aria-label="Help"><svg width="20" height="20"><use href="#help"/></svg></button>
      <div class="d-flex push-row"><button class="push push-main">OK</button><button class="push">Cancel</button><button class="push">Apply</button></div>
    </footer>
  </section>

  <!-- red callouts -->
  <div class="mark-frame mark-big"></div>
  <div class="mark-frame mark-small"></div>
  <svg class="mark-arrow" width="200" height="280" aria-hidden="true"><path d="M12 262L168 32" stroke="#ff4343" stroke-width="10" stroke-linecap="round"/><path d="M187 8l-4 33-25-16z" fill="#ff4343"/></svg>
</div>

<script src="https://cdn.jsdelivr.net/npm/bootstrap@5.3.0/dist/js/bootstrap.bundle.min.js"></script>
<script>
  // level, twisty (- none, > closed, v open), ticked, icon, label
  const items = [
    [0,'-',1,'model','Model - Location'],[0,'-',0,'model','Model - Parameters'],[0,'-',0,'model','Model - Base Data'],
    [0,'-',0,'mesh','Mesh Settings'],[0,'-',0,'mesh','Mesh Quality Criteria'],[0,'-',0,'load','Load Cases &amp; Combination Settings'],
    [0,'-',0,'fx','Script/Formula Parameters'],[0,'>',0,'terrain','Terrain'],[0,'v',1,'folder','Basic Objects'],
    [1,'>',1,'materials','Materials'],[1,'>',1,'sections','Sections'],[1,'>',1,'thick','Thicknesses'],[1,'>',0,'node','Nodes'],
    [1,'>',0,'line','Lines'],[1,'>',1,'member','Members'],[1,'>',1,'memrep','Member Representatives'],[1,'>',0,'lineset','Line Sets'],
    [1,'>',0,'memset','Member Sets'],[1,'>',0,'memsetrep','Member Set Representatives'],[1,'>',1,'surface','Surfaces'],
    [1,'-',1,'opening','Openings'],[1,'>',1,'solid','Solids'],[1,'>',0,'surfset','Surface Sets'],[1,'>',0,'solidset','Solid Sets'],
    [0,'v',1,'folder','Special Objects'],[1,'-',0,'cross','Intersections'],[1,'-',0,'pyramid','Surface Results Adjustments'],
    [1,'-',1,'contact','Surface Contacts'],[1,'-',0,'rigid','Rigid Links'],[1,'>',1,'colhead','Enlarged Column Heads'],
    [1,'>',0,'result','Result Sections'],[1,'>',1,'grid','Structure Modifications'],[1,'-',0,'blocks','Blocks'],
    [1,'-',1,'nodal','Nodal Releases'],[1,'-',1,'linerel','Line Releases'],[1,'-',1,'surfrel','Surface Releases'],
    [1,'>',1,'cut','Cutting Patterns'],[1,'>',1,'sample','Soil Samples'],[1,'-',1,'massif','Soil Massifs'],[0,'v',1,'folder','Types for Nodes']
  ];
  document.getElementById('tree').innerHTML = items.map(([lvl, tw, on, icon, text], i) => {
    const arrow = tw === '-' ? '' : `<svg width="14" height="14" color="${tw === 'v' ? '#333' : '#999'}" ${tw === 'v' ? 'transform="rotate(90)"' : ''}><use href="#chev"/></svg>`;
    const twist = tw === '-' ? '<span class="twist"></span>' : `<button class="twist" aria-label="Toggle">${arrow}</button>`;
    return `<div class="tree-row d-flex align-items-center${lvl ? ' kids' : ''}">${twist}<input class="tick" type="checkbox" id="t${i}" disabled${on ? ' checked' : ''}><svg class="icon" width="20" height="20"><use href="#${icon}"/></svg><label for="t${i}">${text}</label></div>`;
  }).join('');
</script>
</body>
</html>
